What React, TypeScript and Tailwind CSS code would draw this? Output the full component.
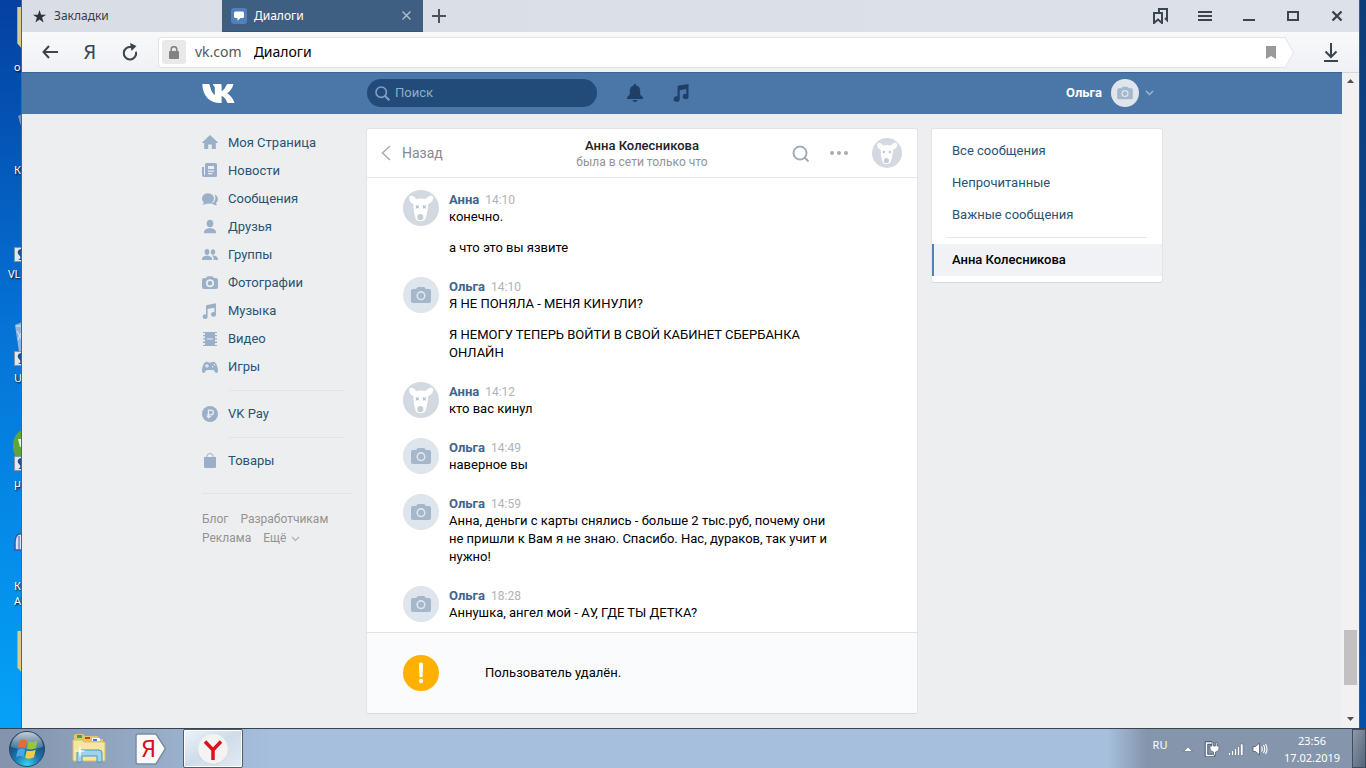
import React, { useState } from "react";

interface IconProps {
  className?: string;
}

interface Message {
  author: "Анна" | "Ольга";
  time: string;
  parts: string[];
}

const messages: Message[] = [
  { author: "Анна", time: "14:10", parts: ["конечно.", "а что это вы язвите"] },
  {
    author: "Ольга",
    time: "14:10",
    parts: [
      "Я НЕ ПОНЯЛА - МЕНЯ КИНУЛИ?",
      "Я НЕМОГУ ТЕПЕРЬ ВОЙТИ В СВОЙ КАБИНЕТ СБЕРБАНКА ОНЛАЙН",
    ],
  },
  { author: "Анна", time: "14:12", parts: ["кто вас кинул"] },
  { author: "Ольга", time: "14:49", parts: ["наверное вы"] },
  {
    author: "Ольга",
    time: "14:59",
    parts: [
      "Анна, деньги с карты снялись - больше 2 тыс.руб, почему они не пришли к Вам я не знаю. Спасибо. Нас, дураков, так учит и нужно!",
    ],
  },
  {
    author: "Ольга",
    time: "18:28",
    parts: ["Аннушка, ангел мой - АУ, ГДЕ ТЫ ДЕТКА?"],
  },
];

const menu = [
  { label: "Моя Страница", icon: HomeIcon },
  { label: "Новости", icon: NewsIcon },
  { label: "Сообщения", icon: ChatIcon },
  { label: "Друзья", icon: FriendIcon },
  { label: "Группы", icon: GroupIcon },
  { label: "Фотографии", icon: CameraIcon },
  { label: "Музыка", icon: MusicIcon },
  { label: "Видео", icon: VideoIcon },
  { label: "Игры", icon: GameIcon },
];

const filters = ["Все сообщения", "Непрочитанные", "Важные сообщения"];

export default function App() {
  return (
    <div className="flex h-screen min-h-[640px] flex-col overflow-hidden bg-[#0a4da8] font-['Roboto','Liberation_Sans',sans-serif] text-[13px] text-black">
      <div className="flex min-h-0 flex-1">
        <DesktopStrip />
        <div className="flex min-w-0 flex-1 flex-col">
          <TabBar />
          <Toolbar />
          <div className="flex min-h-0 flex-1">
            <div className="min-w-0 flex-1 overflow-hidden bg-[#edeef0]">
              <SiteHeader />
              <div className="mx-auto flex max-w-[960px] items-start pt-[15px]">
                <SideMenu />
                <Dialog />
                <Filters />
              </div>
            </div>
            <Scrollbar />
          </div>
        </div>
        <div className="w-[7px] border-l border-[#3d5c80] bg-linear-to-b from-[#0d3d78] to-[#0650a8]" />
      </div>
      <Taskbar />
    </div>
  );
}

/* Desktop */

function DesktopStrip() {
  return (
    <div className="relative w-[22px] overflow-hidden border-r border-[#4c6680] bg-linear-to-b from-[#0540a0] via-[#0673d6] via-45% to-[#06a2f8] font-['Noto_Sans',sans-serif] text-[11px] leading-[14px] text-white text-shadow-[1px_1px_2px_#000]">
      <FolderEdge className="absolute top-[7px] left-[17px]" />
      <span className="absolute top-[60px] left-[14px]">о</span>
      <svg className="absolute top-[114px] left-[18px]" width="4" height="16">
        <path d="M0 2 4 0v14L2 9z" fill="#7c93ad" />
      </svg>
      <span className="absolute top-[163px] left-[14px]">К</span>
      <ShortcutMark className="absolute top-[247px] left-[14px]" />
      <span className="absolute top-[267px] left-[8px]">VL</span>
      <svg className="absolute top-[322px] left-[15px]" width="7" height="30">
        <path d="M0 3 7 0v30H4z" fill="#8fb5dc" />
        <path d="M1 4h6M2 9l5 9M7 9l-4 9" stroke="#d6e7f5" fill="none" />
      </svg>
      <ShortcutMark className="absolute top-[351px] left-[14px]" />
      <span className="absolute top-[371px] left-[14px]">U</span>
      <svg className="absolute top-[430px] left-[13px]" width="9" height="32">
        <path d="M9 0C3 3 0 9 0 16s3 13 9 16z" fill="#5fa53b" />
        <path d="M5 9h4v8H7z" fill="#e9f2e4" />
      </svg>
      <ShortcutMark className="absolute top-[456px] left-[14px]" />
      <span className="absolute top-[476px] left-[14px]">µ</span>
      <svg className="absolute top-[533px] left-[14px]" width="8" height="18">
        <path
          d="M8 1H5C2 2 1 6 1 10v7h7"
          fill="#dfe4f4"
          stroke="#3b56a5"
          strokeWidth="1.5"
        />
        <path d="M5 3v13" stroke="#3b56a5" />
      </svg>
      <span className="absolute top-[579px] left-[14px]">К</span>
      <span className="absolute top-[594px] left-[14px]">А</span>
      <FolderEdge className="absolute top-[631px] left-[17px]" />
    </div>
  );
}

function FolderEdge({ className }: IconProps) {
  return (
    <svg className={className} width="5" height="42">
      <path d="M0 0h5v42L0 36z" fill="#dccb88" />
      <path d="M.5 0v36" stroke="#b9a769" />
    </svg>
  );
}

function ShortcutMark({ className }: IconProps) {
  return (
    <svg className={className} width="8" height="15">
      <path d="M.5.5H8v14H.5z" fill="#dfe8f1" stroke="#8395a8" />
      <path d="M7 2C3 3 3 6 5 8s2 4-1 5h4V2z" fill="#1e4e96" />
    </svg>
  );
}

/* Browser window */

function TabBar() {
  return (
    <div className="flex h-8 items-stretch bg-linear-to-r from-[#d9dde5] to-[#dde1ea] font-['Noto_Sans',sans-serif] text-xs text-[#3b3f44]">
      <button type="button" className="flex w-[200px] items-center gap-2 pl-[11px]">
        <svg width="13" height="13" viewBox="0 0 14 14" fill="#2e3236">
          <path d="M7 0l1.7 5H14L9.8 8.2 11.4 13.5 7 10.3 2.6 13.5 4.2 8.2 0 5h5.3z" />
        </svg>
        Закладки
      </button>
      <div className="flex w-[201px] items-center border-b border-[#33557a] bg-[#3f5f82] pl-[9px] text-white">
        <button type="button" className="flex flex-1 items-center gap-[7px]">
          <svg width="16" height="16">
            <rect width="16" height="16" rx="3" fill="#5181b8" />
            <path
              d="M4.500 3.500h7q1.500 0 1.500 1.500v3.500q0 1.500-1.500 1.500h-2L6.500 12.800V10h-2Q3 10 3 8.500V5q0-1.500 1.500-1.500z"
              fill="#fff"
            />
          </svg>
          Диалоги
        </button>
        <button
          type="button"
          aria-label="Закрыть вкладку"
          className="flex h-full w-[34px] items-center justify-center"
        >
          <svg width="9" height="9" stroke="#b6c4d4" strokeWidth="1.2">
            <path d="M.5.5l8 8M8.500.5l-8 8" />
          </svg>
        </button>
      </div>
      <button
        type="button"
        aria-label="Новая вкладка"
        className="flex w-8 items-center justify-center"
      >
        <svg width="14" height="14" stroke="#4c5258" strokeWidth="2">
          <path d="M7 0v14M0 7h14" />
        </svg>
      </button>
      <div className="ml-auto flex">
        <WindowButton label="Коллекции">
          <path d="M6 4V1h8v11l-2-2" />
          <path d="M1 5h8v10l-4-3.500L1 15z" />
        </WindowButton>
        <WindowButton label="Меню">
          <path d="M1 4h14M1 8h14M1 12h14" />
        </WindowButton>
        <WindowButton label="Свернуть">
          <path d="M2 12h12" />
        </WindowButton>
        <WindowButton label="Развернуть">
          <path d="M3 4h10v8H3z" />
        </WindowButton>
        <WindowButton label="Закрыть">
          <path d="M3.500 3.500l9 9M12.500 3.500l-9 9" strokeWidth="2.400" />
        </WindowButton>
      </div>
    </div>
  );
}

function WindowButton({
  label,
  children,
}: {
  label: string;
  children: React.ReactNode;
}) {
  return (
    <button
      type="button"
      aria-label={label}
      className="flex w-11 items-center justify-center"
    >
      <svg width="16" height="16" fill="none" stroke="#3b454e" strokeWidth="2">
        {children}
      </svg>
    </button>
  );
}

function Toolbar() {
  return (
    <div className="flex h-10 items-center bg-linear-to-b from-[#f8f9fb] to-[#f0f1f4] pl-2 font-['Noto_Sans',sans-serif]">
      <button
        type="button"
        aria-label="Назад"
        className="flex w-10 items-center justify-center"
      >
        <svg width="16" height="14" fill="none" stroke="#3b454e" strokeWidth="2">
          <path d="M16 7H1.500M7 1L1.500 7 7 13" />
        </svg>
      </button>
      <button
        type="button"
        className="w-10 text-center text-xl leading-none text-[#3b454e]"
      >
        Я
      </button>
      <button
        type="button"
        aria-label="Обновить"
        className="flex w-10 items-center justify-center"
      >
        <svg width="16" height="18" fill="none" stroke="#3b454e" strokeWidth="2">
          <path d="M14 8.800a6.200 6.200 0 1 1-4.500-4.600" />
          <path d="M8 0l6.500 3-5 5z" fill="#3b454e" stroke="none" />
        </svg>
      </button>
      <div className="ml-2 flex h-[31px] flex-1">
        <div className="flex flex-1 items-center rounded-l border border-r-0 border-[#e2e4e8] bg-white pl-[3px] text-sm">
          <span className="flex size-6 items-center justify-center rounded-[3px] bg-[#e9e9e9]">
            <svg width="10" height="13">
              <rect y="5" width="10" height="8" rx="1" fill="#828282" />
              <path
                d="M2.200 6V3.500a2.800 2.800 0 0 1 5.600 0V6"
                fill="none"
                stroke="#828282"
                strokeWidth="1.500"
              />
            </svg>
          </span>
          <label htmlFor="address" className="ml-[9px] text-[#51565c]">
            vk.com
          </label>
          <input
            id="address"
            type="text"
            defaultValue="Диалоги"
            className="ml-3 min-w-0 flex-1 bg-transparent outline-none"
          />
          <button type="button" aria-label="В закладки" className="mr-2">
            <svg width="10" height="13" fill="#999">
              <path d="M0 0h10v13L5 10l-5 3z" />
            </svg>
          </button>
        </div>
        <svg width="10" height="31" fill="#fff" stroke="#e2e4e8">
          <path d="M0 .5h1L9.500 15.500 1 30.500H0" />
        </svg>
      </div>
      <button
        type="button"
        aria-label="Загрузки"
        className="ml-[9px] flex w-14 items-center justify-center"
      >
        <svg width="14" height="19" fill="none" stroke="#3b454e" strokeWidth="2">
          <path d="M7 0v14M1.500 8.500L7 14l5.500-5.500M0 18h14" />
        </svg>
      </button>
    </div>
  );
}

function Scrollbar() {
  return (
    <div className="flex w-[17px] flex-col items-center border-t border-[#d4d6d9] bg-[#f1f1f1]">
      <svg width="17" height="17" fill="#505050">
        <path d="M8.500 6l3.500 4H5z" />
      </svg>
      <div className="flex w-full flex-1 flex-col justify-end px-[2px] pb-[26px]">
        <div className="h-[55px] bg-[#c1c1c1]" />
      </div>
      <svg width="17" height="17" fill="#505050">
        <path d="M8.500 10L5 6h7z" />
      </svg>
    </div>
  );
}

/* Site */

function SiteHeader() {
  const [query, setQuery] = useState("");

  return (
    <header className="h-[42px] bg-[#4a76a8] inset-shadow-[0_1px_0_#3c6591]">
      <div className="mx-auto flex h-full max-w-[960px] items-center">
        <a href="#" aria-label="ВКонтакте" className="w-[165px]">
          <svg width="33" height="19" fill="#fff">
            <path d="M.3 0H6.500Q7.500 0 7.800 1.200C8.800 6 10.300 9.600 12.800 11V4Q12.800 2.200 11 1V0H18.300Q19.600 0 19.600 1.300V7.300C22 6 23.500 3.500 24.500 1Q24.900 0 26 0H31.500C30.500 4 28 7.500 25 9.300C28.500 11.500 31 14.500 32.500 19H26.500Q25.300 19 24.800 17.800C23.800 15 22.200 12.800 19.600 12V19H18C8 19 .8 12.500.3 0z" />
          </svg>
        </a>
        <div className="flex h-7 w-[230px] items-center rounded-full bg-[#224b7a] pl-2">
          <label htmlFor="search" aria-label="Поиск">
            <svg width="15" height="15" fill="none" stroke="#7fa0c4" strokeWidth="1.600">
              <circle cx="6.200" cy="6.200" r="5.200" />
              <path d="M10 10l4.300 4.300" strokeWidth="2" />
            </svg>
          </label>
          <input
            id="search"
            type="search"
            value={query}
            onChange={(e) => setQuery(e.target.value)}
            placeholder="Поиск"
            className="ml-[5px] w-full bg-transparent text-[13px] text-white outline-none placeholder:text-[#8fadc8]"
          />
        </div>
        <button type="button" aria-label="Уведомления" className="ml-[30px]">
          <svg width="16" height="18" fill="#1f3f66">
            <path d="M8 0q1.200 0 1.300 1.400C12 2 13.200 4.200 13.200 7v3.500L16 13.200V15H0v-1.800l2.800-2.700V7c0-2.800 1.200-5 3.900-5.600Q6.800 0 8 0zM5.500 16h5Q10 18 8 18t-2.500-2z" />
          </svg>
        </button>
        <button type="button" aria-label="Музыка" className="ml-[30px]">
          <svg width="16" height="18" fill="#1f3f66">
            <path d="M4.500 3Q4.500 1.700 6 1.500L15.500 0v12.500a2.900 2.600 0 1 1-2.200-2.500V5L6.700 6.200v8.800A3 2.700 0 1 1 4.500 12.500z" />
          </svg>
        </button>
        <button
          type="button"
          className="ml-auto flex items-center pr-2 font-bold text-white"
        >
          Ольга
          <CameraAvatar className="ml-[9px] size-7" />
          <ChevronDown className="ml-[6px] text-[#9db8d5]" />
        </button>
      </div>
    </header>
  );
}

function SideMenu() {
  return (
    <nav className="w-[165px] shrink-0 text-[#285473]">
      {menu.map((item) => (
        <MenuLink key={item.label} label={item.label} icon={item.icon} />
      ))}
      <div className="my-[9px] mr-[22px] ml-[27px] h-px bg-[#dfe3ea]" />
      <MenuLink label="VK Pay" icon={PayIcon} />
      <div className="my-[9px] mr-[22px] ml-[27px] h-px bg-[#dfe3ea]" />
      <MenuLink label="Товары" icon={BagIcon} />
      <div className="mt-[18px] mr-[15px] h-px bg-[#dfe3ea]" />
      <div className="mt-4 flex flex-wrap gap-x-3 text-xs leading-[19px] text-[#939393]">
        <a href="#">Блог</a>
        <a href="#">Разработчикам</a>
        <a href="#">Реклама</a>
        <a href="#" className="flex items-center gap-[5px]">
          Ещё
          <ChevronDown className="text-[#b5b8bd]" />
        </a>
      </div>
    </nav>
  );
}

function MenuLink({
  label,
  icon: Icon,
}: {
  label: string;
  icon: (props: IconProps) => React.ReactElement;
}) {
  return (
    <a href="#" className="flex h-7 items-center gap-[10px]">
      <Icon className="text-[#9ab0c9]" />
      {label}
    </a>
  );
}

function Dialog() {
  return (
    <main className="min-w-0 flex-1 rounded-[2px] bg-white shadow-[0_1px_0_0_#d7d8db,0_0_0_1px_#e3e4e8]">
      <div className="grid h-[49px] grid-cols-[1fr_auto_1fr] items-center border-b border-[#e4e6e9]">
        <a
          href="#"
          className="flex items-center gap-[11px] pl-[14px] text-sm text-[#828a99]"
        >
          <svg width="10" height="16" fill="none" stroke="#a3adb8" strokeWidth="1.500">
            <path d="M9 1L1.500 8 9 15" />
          </svg>
          Назад
        </a>
        <div className="pt-px text-center leading-4">
          <h1 className="font-medium text-[#222]">Анна Колесникова</h1>
          <p className="text-xs leading-4 text-[#939393]">была в сети только что</p>
        </div>
        <div className="flex items-center justify-end pr-[15px]">
          <button type="button" aria-label="Поиск по сообщениям">
            <svg width="18" height="18" fill="none" stroke="#a3adb8" strokeWidth="2">
              <circle cx="9" cy="9" r="6.500" />
              <path d="M13.500 13.500l4 4" />
            </svg>
          </button>
          <button type="button" aria-label="Действия" className="ml-5">
            <svg width="20" height="4" fill="#a3adb8">
              <circle cx="3" cy="2" r="2" />
              <circle cx="10" cy="2" r="2" />
              <circle cx="17" cy="2" r="2" />
            </svg>
          </button>
          <DogAvatar className="ml-[23px] size-[30px]" />
        </div>
      </div>

      <ul className="pt-[2px]">
        {messages.map((m) => (
          <li
            key={m.author + m.time}
            className="flex items-start gap-[10px] py-[10px] pr-20 pl-9"
          >
            {m.author === "Анна" ? (
              <DogAvatar className="size-9 shrink-0" />
            ) : (
              <CameraAvatar className="size-9 shrink-0" />
            )}
            <div className="pt-px leading-[18px]">
              <div className="flex h-[17px] gap-[6px]">
                <a href="#" className="font-bold text-[#42648b]">
                  {m.author}
                </a>
                <time className="text-xs leading-[18px] text-[#b0b3b8]">{m.time}</time>
              </div>
              {m.parts.map((text) => (
                <p key={text} className="not-last:mb-[13px]">
                  {text}
                </p>
              ))}
            </div>
          </li>
        ))}
      </ul>

      <div className="flex h-[81px] items-center gap-[46px] rounded-b-[2px] border-t border-[#e0e2e6] bg-[#fafbfc] pl-9">
        <svg width="36" height="36">
          <circle cx="18" cy="18" r="18" fill="#ffb000" />
          <path
            d="M17 8.800h2l-.4 12.500h-1.200z"
            fill="#fff"
            stroke="#fff"
            strokeWidth="2"
            strokeLinejoin="round"
          />
          <circle cx="18" cy="26" r="2.200" fill="#fff" />
        </svg>
        Пользователь удалён.
      </div>
    </main>
  );
}

function Filters() {
  return (
    <aside className="ml-[15px] w-[230px] shrink-0 rounded-[2px] bg-white py-[6px] text-[#285473] shadow-[0_1px_0_0_#d7d8db,0_0_0_1px_#e3e4e8]">
      {filters.map((f) => (
        <a key={f} href="#" className="flex h-8 items-center px-5">
          {f}
        </a>
      ))}
      <div className="mx-[15px] my-[6px] h-px bg-[#e4e6e9]" />
      <a
        href="#"
        className="flex h-8 items-center border-l-2 border-[#5181b8] bg-[#f0f2f5] pl-[18px] font-medium text-black"
      >
        Анна Колесникова
      </a>
    </aside>
  );
}

function CameraAvatar({ className }: IconProps) {
  return (
    <svg className={className} viewBox="0 0 36 36">
      <circle cx="18" cy="18" r="18" fill="#dfe5ec" />
      <path
        d="M10 12h3l1.200-1.400q.4-.6 1.200-.6h5.200q.8 0 1.200.6L23 12h3q2 0 2 2V24q0 2-2 2H10q-2 0-2-2V14q0-2 2-2z"
        fill="#a5b7ca"
      />
      <circle cx="18" cy="18.700" r="3.800" fill="none" stroke="#dfe5ec" strokeWidth="1.600" />
    </svg>
  );
}

function DogAvatar({ className }: IconProps) {
  return (
    <svg className={className} viewBox="0 0 36 36">
      <circle cx="18" cy="18" r="18" fill="#d2d9e0" />
      <path
        d="M6.500 6.500C8.500 4.800 11.500 6.500 13 9Q18 8 23 9C24.500 6.500 28 4.800 30 6.500C31 10 28.500 13 25 14C25 19 24.300 23 23 27Q21.800 31.300 17.500 31.300T12.200 27C11 23 10.500 19 10.500 14C7.500 13 5.500 10 6.500 6.500z"
        fill="#fff"
      />
      <circle cx="17.300" cy="27" r="3.100" fill="#c5ced8" />
      <path
        d="M12.800 15.300l3 3M15.800 15.300l-3 3M19.800 15.300l3 3M22.800 15.300l-3 3"
        stroke="#b5c0cc"
        strokeWidth="1.200"
      />
    </svg>
  );
}

function ChevronDown({ className }: IconProps) {
  return (
    <svg
      className={className}
      width="9"
      height="6"
      fill="none"
      stroke="currentColor"
      strokeWidth="1.500"
    >
      <path d="M1 1l3.500 3.500L8 1" />
    </svg>
  );
}

/* Menu icons, all on a 16px box */

function MenuIcon({
  className,
  children,
}: IconProps & { children: React.ReactNode }) {
  return (
    <svg className={className} width="16" height="16" fill="currentColor">
      {children}
    </svg>
  );
}

function HomeIcon({ className }: IconProps) {
  return (
    <MenuIcon className={className}>
      <path d="M8 0L16 7.500V8H13.800V14H9.800V9.500H6.200V14H2.200V8H0V7.500z" />
    </MenuIcon>
  );
}

function NewsIcon({ className }: IconProps) {
  return (
    <MenuIcon className={className}>
      <path
        fillRule="evenodd"
        d="M4.500 0H13.500Q15 0 15 1.500V12.500Q15 14 13.500 14H2Q0 14 0 12V4H2V11.500Q2 12.200 2.500 12.200T3 11.500V1.500Q3 0 4.500 0zM6 3V6H12V3zM6 7.500V8.700H12V7.500zM6 10V11.200H10.500V10z"
      />
    </MenuIcon>
  );
}

function ChatIcon({ className }: IconProps) {
  return (
    <MenuIcon className={className}>
      <ellipse cx="6" cy="7.500" rx="6" ry="5.200" />
      <path d="M1.500 10.500Q2 13 .5 13.800Q3.500 14 5.500 12zM12.500 3.300C16.500 5 17 10 14 11.800Q14.200 13.500 15.200 14.200Q12.500 14.400 11 13C8.500 13.200 8 12.700 8 12.700C13 12 14.500 7 12.500 3.300z" />
    </MenuIcon>
  );
}

function FriendIcon({ className }: IconProps) {
  return (
    <MenuIcon className={className}>
      <ellipse cx="8" cy="4.500" rx="3.300" ry="3.800" />
      <path d="M2 13.500C2 10.500 5 9.300 8 9.300s6 1.200 6 4.200q0 .8-.8.800H2.800Q2 14.300 2 13.500z" />
    </MenuIcon>
  );
}

function GroupIcon({ className }: IconProps) {
  return (
    <MenuIcon className={className}>
      <ellipse cx="5" cy="5" rx="2.400" ry="2.900" />
      <ellipse cx="11" cy="5" rx="2.200" ry="2.700" />
      <path d="M0 13V12C0 9.800 2.500 8.800 5 8.800s5 1 5 3.200v1zM10 8.600C13 8.300 16 9.600 16 12v1h-4.500C11.700 11 11.200 9.600 10 8.600z" />
    </MenuIcon>
  );
}

function CameraIcon({ className }: IconProps) {
  return (
    <MenuIcon className={className}>
      <path
        fillRule="evenodd"
        d="M2 3H4L5 1.700Q5.300 1.300 6 1.300H10Q10.700 1.300 11 1.700L12 3H14Q16 3 16 5V12Q16 14 14 14H2Q0 14 0 12V5Q0 3 2 3zM8 4.300a4 4 0 1 0 0 8a4 4 0 1 0 0-8zM8 6a2.300 2.300 0 1 1 0 4.600a2.300 2.300 0 1 1 0-4.600z"
      />
    </MenuIcon>
  );
}

function MusicIcon({ className }: IconProps) {
  return (
    <MenuIcon className={className}>
      <path d="M4 3.300Q4 2.200 5 2L14 .3V11.300A2.500 2.300 0 1 1 12.400 9.200V4.800L5.600 6V13.600A2.500 2.300 0 1 1 4 11.500z" />
    </MenuIcon>
  );
}

function VideoIcon({ className }: IconProps) {
  return (
    <MenuIcon className={className}>
      <path
        fillRule="evenodd"
        d="M1 1H15V15H1zM1 2V4H3V2zM1 5.300V7.300H3V5.300zM1 8.600V10.600H3V8.600zM1 12V14H3V12zM13 2V4H15V2zM13 5.300V7.300H15V5.300zM13 8.600V10.600H15V8.600zM13 12V14H15V12zM5 7.500V8.500H11V7.500z"
      />
    </MenuIcon>
  );
}

function GameIcon({ className }: IconProps) {
  return (
    <MenuIcon className={className}>
      <path
        fillRule="evenodd"
        d="M4.500 2.800Q6 2.800 6.500 3.500H9.500Q10 2.800 11.500 2.800C14 2.800 16 8 16 12Q16 14 14.500 14C12.800 14 12.500 11 11 11H5C3.500 11 3.200 14 1.500 14Q0 14 0 12C0 8 2 2.800 4.500 2.800zM4.300 5V6.300H3V7.500H4.300V8.800H5.500V7.500H6.800V6.300H5.500V5zM11.800 5V6.200H13V5zM10 7V8.200H11.200V7z"
      />
    </MenuIcon>
  );
}

function PayIcon({ className }: IconProps) {
  return (
    <MenuIcon className={className}>
      <circle cx="8" cy="8" r="8" />
      <path
        d="M6.500 12.500V4.200H9a2.200 2.200 0 0 1 0 4.600H4.800M4.800 10.700H9"
        fill="none"
        stroke="#edeef0"
        strokeWidth="1.300"
      />
    </MenuIcon>
  );
}

function BagIcon({ className }: IconProps) {
  return (
    <MenuIcon className={className}>
      <path d="M2 4H14V13.500Q14 15 12.500 15H3.500Q2 15 2 13.500z" />
      <path d="M4.700 5V3.800a3.300 3.300 0 0 1 6.600 0V5" fill="none" stroke="currentColor" />
    </MenuIcon>
  );
}

/* Taskbar */

function Taskbar() {
  return (
    <footer className="flex h-10 items-stretch border-t border-[#38434f] bg-linear-to-r from-[#8293ab] via-[#a6bfdc] via-20% to-[#a6bfdc] font-['Noto_Sans',sans-serif] text-[11px] text-white">
      <button
        type="button"
        aria-label="Пуск"
        className="mr-[5px] flex w-[54px] items-center justify-center"
      >
        <StartOrb />
      </button>
      <div className="flex gap-[2px]">
        <button
          type="button"
          aria-label="Проводник"
          className="flex w-[60px] items-center justify-center"
        >
          <ExplorerIcon />
        </button>
        <button
          type="button"
          aria-label="Яндекс"
          className="flex w-[60px] items-center justify-center"
        >
          <svg width="32" height="32">
            <path
              d="M3 1H21L30.500 15.500 21 31H3Q1 31 1 29V3Q1 1 3 1z"
              fill="#fafafa"
              stroke="#7b8da5"
              strokeWidth="1.500"
            />
            <text
              x="13.500"
              y="24"
              textAnchor="middle"
              fontSize="23"
              fill="#d8101b"
              fontFamily="'Liberation Sans Narrow','Roboto',sans-serif"
            >
              Я
            </text>
          </svg>
        </button>
        <button
          type="button"
          aria-label="Яндекс.Браузер"
          className="flex w-[60px] items-center justify-center rounded-[2px] border border-[#4e5e70] bg-linear-to-br from-[#eef3f9] via-[#cfdcea] to-[#e3ebf4] inset-shadow-[0_0_0_1px_#fff]"
        >
          <svg width="32" height="32">
            <circle cx="16" cy="16.500" r="15" fill="#b9c3ce" />
            <circle cx="16" cy="16" r="15" fill="#f3f3f3" />
            <path
              d="M8 8.500L16 17 24 8.500M16 16v11"
              fill="none"
              stroke="#d9141e"
              strokeWidth="3.500"
            />
          </svg>
        </button>
      </div>

      <div className="ml-auto flex items-stretch bg-linear-to-r from-transparent to-[#8495ac] to-15% pl-9">
        <button type="button" className="w-8 pb-[6px] text-center">
          RU
        </button>
        <TrayButton label="Показать скрытые значки">
          <path d="M8 6l4.500 4.500h-9z" fill="#fff" stroke="#55657a" strokeWidth=".6" />
        </TrayButton>
        <TrayButton label="Питание">
          <path
            d="M8 2H2.500v12.500h7V13M4.500 1.500h3"
            fill="none"
            stroke="#4a586b"
            strokeWidth="3.500"
          />
          <path d="M8 2H2.500v12.500h7V13" fill="none" stroke="#fff" strokeWidth="1.500" />
          <path
            d="M6 5h2V1.500h1.500V5h2V1.500H13V5h2v2.500q0 3-3.500 3.500V14h-2v-3Q6 10.500 6 7.500z"
            fill="#fff"
            stroke="#4a586b"
            strokeWidth=".7"
          />
        </TrayButton>
        <TrayButton label="Сеть">
          <path
            d="M.5 11.500h2v3h-2zM3.500 9.500h2v5h-2zM6.500 7.500h2v7h-2zM9.500 5.500h2v9h-2zM12.500 3h2.500v11.500h-2.500z"
            fill="#fff"
            stroke="#55657a"
            strokeWidth=".5"
          />
        </TrayButton>
        <TrayButton label="Громкость">
          <path
            d="M1 5.500h2.500L7.500 2v12L3.500 10.500H1z"
            fill="#fff"
            stroke="#4a586b"
            strokeWidth=".8"
          />
          <path
            d="M9.500 5.500q1.500 2.500 0 5M11.500 4q2.500 4 0 8M13.500 3q3 5 0 10"
            fill="none"
            stroke="#fff"
            strokeWidth="1.100"
          />
        </TrayButton>
        <button
          type="button"
          className="w-20 text-center leading-[17px]"
        >
          <span className="block">23:56</span>
          <span className="block">17.02.2019</span>
        </button>
        <button
          type="button"
          aria-label="Свернуть все окна"
          className="w-[14px] border border-[#3f4d5e] bg-linear-to-br from-[#8c99aa] to-[#56657a]"
        />
      </div>
    </footer>
  );
}

function TrayButton({
  label,
  children,
}: {
  label: string;
  children: React.ReactNode;
}) {
  return (
    <button
      type="button"
      aria-label={label}
      className="flex w-6 items-center justify-center"
    >
      <svg width="16" height="16">{children}</svg>
    </button>
  );
}

function StartOrb() {
  return (
    <svg width="36" height="36">
      <defs>
        <radialGradient id="orb" cx=".5" cy=".95" r=".85">
          <stop offset="0" stopColor="#35d3f2" />
          <stop offset=".45" stopColor="#1b74ad" />
          <stop offset="1" stopColor="#153f66" />
        </radialGradient>
        <linearGradient id="gloss" x2="0" y2="1">
          <stop offset="0" stopColor="#fff" stopOpacity=".75" />
          <stop offset="1" stopColor="#fff" stopOpacity=".15" />
        </linearGradient>
      </defs>
      <circle cx="18" cy="18" r="17.500" fill="url(#orb)" stroke="#27496b" />
      <path d="M2 16a16 15 0 0 1 32 0q-16 5-32 0z" fill="url(#gloss)" />
      <path d="M10.500 10Q14 7.500 18 9.500L16.500 17Q13 15.200 9 17.200z" fill="#ee6a2c" />
      <path d="M19.500 10.200Q23.500 12 28.500 9.500L27 17Q22.500 19.500 18 17.700z" fill="#93c83e" />
      <path d="M8.700 18.800Q12.500 17 16.200 18.700L14.600 26Q11 24 7 26z" fill="#4aa6e8" />
      <path d="M17.700 19.400Q22 21 26.700 18.700L25 26.200Q20.500 28.800 16.200 26.700z" fill="#fccb3a" />
    </svg>
  );
}

function ExplorerIcon() {
  return (
    <svg width="34" height="32">
      <path d="M2 3q0-2 2-2h7l2 2h13l1 3h4v22H2z" fill="#e3c66c" />
      <path d="M5 2h5v3H5z" fill="#2fb02f" />
      <path d="M13 4h5v2h-5z" fill="#d13b2a" />
      <path d="M20 5h8v3h-8z" fill="#fff" />
      <path d="M21 6h4v2h-4z" fill="#2d83d6" />
      <path d="M1 7h9l2 2h20q1 0 1 1v17q0 1-1 1H2q-1 0-1-1z" fill="#f6e6a4" stroke="#d8bd68" />
      <path
        d="M5 29v-9q0-3 3-3h19q3 0 3 3v9h-5v-6H10v6z"
        fill="#9fd3ec"
        stroke="#4a94bf"
      />
      <path d="M8 11l1 6 5 1-5 1-1 6-1-6-5-1 5-1z" fill="#fff" opacity=".9" />
    </svg>
  );
}
